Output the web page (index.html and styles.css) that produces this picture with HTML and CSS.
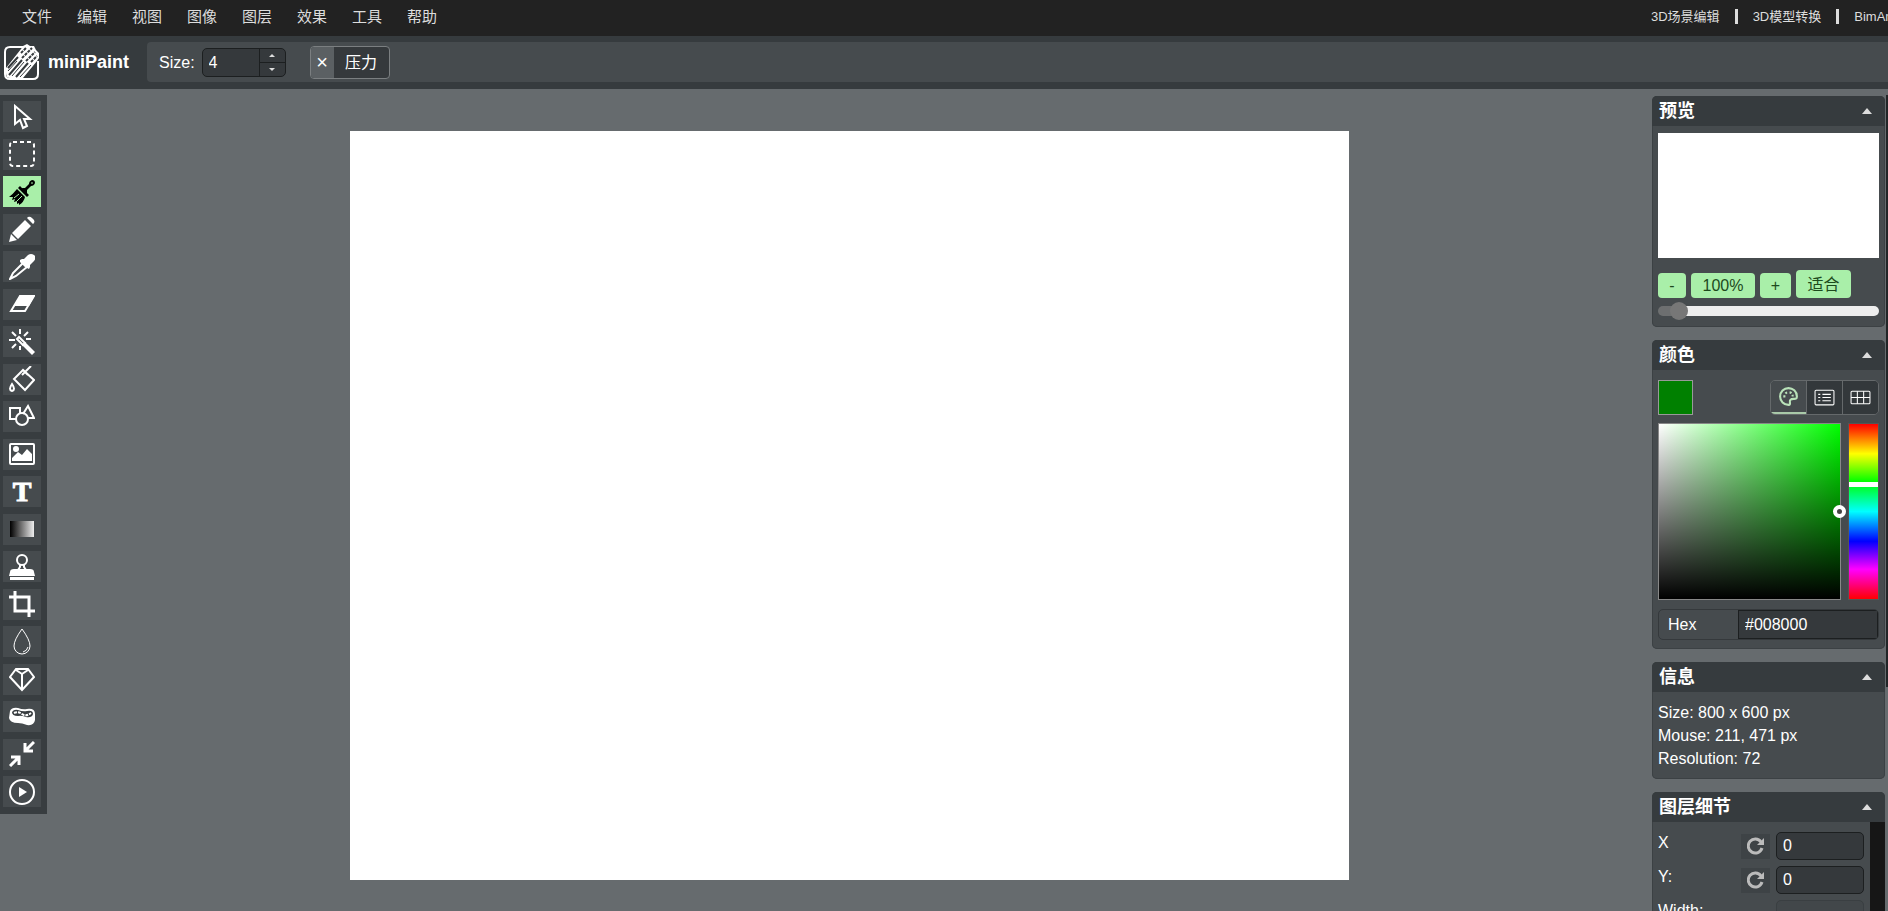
FILE: index.html
```html
<!doctype html>
<html lang="zh-cmn-Hans">
<head>
<meta charset="utf-8">
<title>miniPaint</title>
<meta name="viewport" content="width=device-width, initial-scale=1.0">
<link rel="stylesheet" href="styles.css">
</head>
<body>

<nav class="menu">
	<ul class="menu-main">
		<li><a href="#file">文件</a></li>
		<li><a href="#edit">编辑</a></li>
		<li><a href="#view">视图</a></li>
		<li><a href="#image">图像</a></li>
		<li><a href="#layers">图层</a></li>
		<li><a href="#effects">效果</a></li>
		<li><a href="#tools">工具</a></li>
		<li><a href="#help">帮助</a></li>
	</ul>
	<ul class="menu-links">
		<li><a href="#editor">3D场景编辑</a></li>
		<li><a href="#convert">3D模型转换</a></li>
		<li><a href="#bimant">BimAnt</a></li>
	</ul>
</nav>

<header class="submenu">
	<a class="logo" href="#home">
		<svg viewBox="0 0 36 36" width="36" height="36" fill="none" stroke="#fff">
			<path stroke-width="2" d="M20 3H6Q1 3 1 8v22q0 5 5 5h23q5 0 5-5V17"/>
			<path fill="#fff" stroke="none" d="M2 24 17 5l2-3 4-2 3 2 4 0 2 4 3 3 0 5-2 3L19 34H6q-4 0-4-5z"/>
			<path stroke="#34393c" stroke-width="2" d="M4 24 14 13M5 31l13-15M12 33l12-14"/>
			<path stroke="#34393c" stroke-width="2" stroke-dasharray="3 1" d="M17 9l5-5M18 14l10-10M22 17l9-9M27 18l6-6"/>
			<path stroke="#34393c" d="M4 27l9-10M8 32l12-14M16 33l11-12"/>
		</svg>
		<span>miniPaint</span>
	</a>
	<div class="attributes">
		<label for="size">Size:</label>
		<div class="number">
			<input id="size" type="text" value="4">
			<div class="spin">
				<button aria-label="+1"><i class="up"></i></button>
				<button aria-label="-1"><i class="down"></i></button>
			</div>
		</div>
		<button class="toggle"><i>×</i><span>压力</span></button>
	</div>
</header>

<main class="wrapper">
	<aside class="tools">
		<button aria-label="Select"><svg viewBox="0 0 26 26"><path d="M6 2v18l5-4 3 8 4-2-3-7h6z"/></svg></button>
		<button aria-label="Selection"><svg viewBox="0 0 26 26"><rect x="1" y="1" width="24" height="24" rx="3" stroke-dasharray="4 3"/></svg></button>
		<button class="active" aria-label="Brush"><svg viewBox="0 0 26 26"><path class="solid" d="M9 9l2-2 9 9-2 2zM13 9l3 0 4-4q0-3 3-4 3 0 3 3-1 3-4 3l-4 4 0 3zM8 10l8 8q-1 5-6 8l0-2-2 1 0-3-3 1 1-3-3 1 1-3-4 0q4-3 8-8z"/><path class="shine" d="M5 19l5-4M8 22l5-5M22 4h2"/></svg></button>
		<button aria-label="Pencil"><svg viewBox="0 0 26 26"><path class="solid" d="M19 1q2-1 4 1l2 2q1 2 0 3l-1 1-6-6zM16 4l6 6L9 23l-6-6zM2 18l6 6-8 2z"/></svg></button>
		<button aria-label="Pick color"><svg viewBox="0 0 26 26"><path d="M14 9 4 19l-3 6 6-3L18 13z"/><path class="solid" d="M11 6l2-1 2 0 4-4q3-2 6 0t0 6l-4 4 0 2-1 2-4-2-5-5z"/></svg></button>
		<button aria-label="Erase"><svg viewBox="0 0 26 26"><path d="M11 5h14l-9 15H2z"/><path class="solid" d="M11 4h15l-6 11H5z"/></svg></button>
		<button aria-label="Magic erase"><svg viewBox="0 0 26 26"><path d="M11 0v5M3 3l4 4M0 11h6M3 19l4-4M11 21v-4M19 3l-4 4M17 10h5"/><path d="M8 10l2-2 6 6-2 2z"/><path class="solid" d="M13 16l3-3 10 10-3 3z"/></svg></button>
		<button aria-label="Fill"><svg viewBox="0 0 26 26"><path d="M14 4 5 13l11 11 9-10zM22 0l-9 9M14 4l5 5"/><path d="M3 18q-4 6 0 7 4-1 0-7z"/></svg></button>
		<button aria-label="Shape"><svg viewBox="0 0 26 26"><path d="M7 15H1V4h10v5M14 10l5-8 6 12h-6"/><circle cx="13" cy="15" r="6"/></svg></button>
		<button aria-label="Media"><svg viewBox="0 0 26 26"><rect x="1" y="3" width="24" height="20" rx="1"/><circle class="solid" cx="7" cy="8" r="3"/><path class="solid" d="M3 20v-3l6-6 4 3 5-6 5 5v7z"/></svg></button>
		<button aria-label="Text"><svg viewBox="0 0 26 26"><text x="13" y="22">T</text></svg></button>
		<button aria-label="Gradient"><i class="gradient"></i></button>
		<button aria-label="Clone"><svg viewBox="0 0 26 26"><circle cx="13" cy="6" r="5"/><path d="M11 10v3l-2 3h8l-2-3v-3"/><path class="solid" d="M1 18q0-3 4-3h16q4 0 4 3l1 4H0zM1 23h24v3H1z"/></svg></button>
		<button aria-label="Crop"><svg viewBox="0 0 26 26"><path stroke-width="3" d="M0 6h20v20M6 0v20h20"/></svg></button>
		<button aria-label="Blur"><svg viewBox="0 0 26 26"><path stroke-width="1" d="M13 0q8 11 8 17a8 8 0 0 1-16 0q0-6 8-17zM19 18q-1 4-5 5"/></svg></button>
		<button aria-label="Sharpen"><svg viewBox="0 0 26 26"><path d="M7 3h12l6 8-12 13L1 11zM13 23V8M13 8 7 4M13 8l6-4"/></svg></button>
		<button aria-label="Desaturate"><svg viewBox="0 0 26 26"><path class="solid" d="M1 7q2-4 8-3 5 2 9 1 8-1 8 5v6q-1 6-8 5-5-2-9-2-8 0-9-5z"/><path class="hole" d="M3 8q2-3 6-2 5 2 9 1 6-1 6 3-1 4-7 3-5-2-8-1-6 0-6-4z"/><path stroke-dasharray="3 1" d="M5 9q4-2 8 1t9-1"/></svg></button>
		<button aria-label="Bulge/Pinch"><svg viewBox="0 0 26 26"><path d="M25 1l-8 8M16 2v8h8M1 25l8-8M10 24v-8H2" stroke-width="3"/></svg></button>
		<button aria-label="Animation"><svg viewBox="0 0 26 26"><circle cx="13" cy="13" r="12"/><path class="solid" d="M10 8l8 5-8 5z"/></svg></button>
	</aside>

	<section class="stage">
		<canvas class="canvas" width="999" height="749"></canvas>
	</section>

	<aside class="sidebar">
		<section class="block">
			<h2>预览 <i class="up"></i></h2>
			<div class="content preview">
				<canvas class="thumb" width="221" height="125"></canvas>
				<div class="zoom">
					<button class="minus">-</button>
					<button>100%</button>
					<button class="plus">+</button>
					<button class="fit">适合</button>
				</div>
				<input class="range" type="range" min="0" max="100" value="6" aria-label="Zoom">
			</div>
		</section>

		<section class="block">
			<h2>颜色 <i class="up"></i></h2>
			<div class="content colors">
				<div class="color-top">
					<button class="swatch" aria-label="Color"></button>
					<div class="tabs">
						<button class="active" aria-label="Picker"><svg viewBox="0 0 20 20"><path stroke-width="2" d="M10 2a8 8 0 1 0 0 16c3 0 0-4 2-5 2-2 6 1 6-3 0-5-4-8-8-8z"/><path stroke-width="2" stroke-dasharray="2 2" d="M6 11q0-5 4-5t4 4"/></svg></button>
						<button aria-label="Channels"><svg viewBox="0 0 20 20"><rect x="1" y="3" width="18" height="14" rx="1"/><path d="M4 7h2M8 7h8M4 10h2M8 10h8M4 13h2M8 13h8"/></svg></button>
						<button aria-label="Swatches"><svg viewBox="0 0 20 20"><rect x="1" y="4" width="18" height="12" rx="1"/><path d="M1 10h18M7 4v12M13 4v12"/></svg></button>
					</div>
				</div>
				<div class="picker">
					<div class="gradient-area"><i class="handle"></i></div>
					<div class="hue"><i class="handle"></i></div>
				</div>
				<div class="hex">
					<label for="hex">Hex</label>
					<input id="hex" type="text" value="#008000">
				</div>
			</div>
		</section>

		<section class="block">
			<h2>信息 <i class="up"></i></h2>
			<div class="content info">
				<p>Size: 800 x 600 px</p>
				<p>Mouse: 211, 471 px</p>
				<p>Resolution: 72</p>
			</div>
		</section>

		<section class="block">
			<h2>图层细节 <i class="up"></i></h2>
			<div class="content details">
				<div class="row">
					<label for="x">X</label>
					<button aria-label="Reset X"><svg viewBox="0 0 18 18"><path d="M14 5a7 7 0 1 0 1 6"/><path class="solid" d="M17 1v7h-7z"/></svg></button>
					<input id="x" type="text" value="0">
				</div>
				<div class="row">
					<label for="y">Y:</label>
					<button aria-label="Reset Y"><svg viewBox="0 0 18 18"><path d="M14 5a7 7 0 1 0 1 6"/><path class="solid" d="M17 1v7h-7z"/></svg></button>
					<input id="y" type="text" value="0">
				</div>
				<div class="row">
					<label for="width">Width:</label>
					<input id="width" class="off" type="text" disabled>
				</div>
			</div>
		</section>
	</aside>
</main>

</body>
</html>
```
FILE: styles.css
```css
* {
	box-sizing: border-box;
}
body {
	display: flex;
	flex-direction: column;
	height: 100vh;
	margin: 0;
	overflow: hidden;
	background: #666b6e;
	color: #fff;
	font: 16px/23px "Liberation Sans", "Noto Sans CJK SC", sans-serif;
}
button, input {
	margin: 0;
	padding: 0;
	border: 0;
	color: inherit;
	font: inherit;
}
ul, p, h2 {
	margin: 0;
	padding: 0;
	list-style: none;
}
a {
	color: inherit;
	text-decoration: none;
}
svg {
	display: block;
	fill: none;
	stroke: currentColor;
}
.up, .down {
	border: 4px solid transparent;
}
.up {
	border-top: 0;
	border-bottom-color: #ddd;
}
.down {
	border-bottom: 0;
	border-top-color: #ddd;
}

/* menu */
.menu {
	display: flex;
	flex: none;
	justify-content: space-between;
	height: 36px;
	background: #222;
	color: #ddd;
	line-height: 33px;
}
.menu ul {
	display: flex;
	white-space: nowrap;
}
.menu-main {
	gap: 25px;
	padding-left: 22px;
	font-size: 15px;
}
.menu .menu-links {
	width: 237px;
	height: 33px;
	overflow: hidden;
	font-size: 13px;
}
.menu-links li {
	display: flex;
	align-items: center;
}
.menu-links li + li::before {
	content: "";
	width: 3px;
	height: 15px;
	margin: 0 15px;
	background: #ddd;
}

/* tool attributes */
.submenu {
	display: flex;
	flex: none;
	height: 53px;
	padding: 6px 0 7px 4px;
	background: #363b3e;
}
.logo {
	display: flex;
	align-items: center;
	gap: 8px;
	width: 143px;
	font-size: 18px;
	font-weight: bold;
}
.attributes {
	display: flex;
	flex: 1;
	align-items: center;
	padding-left: 12px;
	border-radius: 4px 0 0 4px;
	background: #464b4e;
}
.number {
	display: flex;
	width: 84px;
	height: 29px;
	margin: 0 24px 0 7px;
	border: 1px solid #1c1f20;
	border-radius: 5px;
	background: #35393c;
}
.number input {
	flex: 1;
	min-width: 0;
	padding-left: 6px;
	background: none;
}
.spin {
	display: flex;
	flex-direction: column;
	width: 26px;
	border-left: 1px solid #1c1f20;
}
.spin button {
	display: flex;
	flex: 1;
	align-items: center;
	justify-content: center;
	background: none;
}
.spin button + button {
	border-top: 1px solid #1c1f20;
}
.spin i {
	border-left-width: 3px;
	border-right-width: 3px;
}
.spin .up {
	border-bottom-width: 3px;
}
.spin .down {
	border-top-width: 3px;
}
.toggle {
	display: flex;
	width: 80px;
	height: 33px;
	overflow: hidden;
	border: 1px solid #7b7f81;
	border-radius: 4px;
	background: #35393c;
	line-height: 31px;
}
.toggle i {
	width: 23px;
	background: #5b6063;
	font-size: 20px;
	font-style: normal;
}
.toggle span {
	flex: 1;
}

/* tools */
.wrapper {
	display: flex;
	flex: 1;
	align-items: flex-start;
	min-height: 0;
}
.tools {
	display: flex;
	flex: none;
	flex-direction: column;
	justify-content: space-between;
	width: 47px;
	height: 719px;
	margin-top: 6px;
	padding: 6px 6px 7px 3px;
	background: #383d40;
}
.tools button {
	display: flex;
	align-items: center;
	justify-content: center;
	height: 31px;
	background: #464b4e;
}
.tools .active {
	background: #a9efa9;
	color: #000;
}
.tools svg {
	width: 26px;
	height: 26px;
	stroke-width: 2;
}
.tools text {
	fill: #fff;
	stroke: #fff;
	stroke-width: 1;
	font: bold 28px "Liberation Serif", serif;
	text-anchor: middle;
}
.solid {
	fill: currentColor;
	stroke: none;
}
.shine {
	stroke: #a9efa9;
	stroke-width: 1;
}
.hole {
	fill: #383d40;
	stroke: none;
}
.gradient {
	width: 24px;
	height: 16px;
	background: linear-gradient(to right, #000, #eee);
}

/* drawing area */
.stage {
	display: flex;
	flex: 1;
	justify-content: center;
	min-width: 0;
	padding-top: 42px;
}
.canvas {
	flex: none;
	background: #fff;
}

/* sidebar */
.sidebar {
	position: relative;
	display: flex;
	flex: none;
	flex-direction: column;
	gap: 13px;
	align-self: stretch;
	width: 236px;
	padding: 7px 3px 0 0;
	overflow: hidden;
}
/* scroll thumb */
.sidebar::after {
	content: "";
	position: absolute;
	top: 6px;
	right: 0;
	width: 2px;
	height: 72%;
	background: #222527;
}
.block {
	flex: none;
	overflow: hidden;
	border-radius: 5px;
	background: #464b4e;
	box-shadow: inset 0 0 0 1px #3c4144;
}
.block h2 {
	display: flex;
	align-items: center;
	justify-content: space-between;
	height: 30px;
	padding: 0 13px 0 7px;
	background: #363b3e;
	font-size: 18px;
	line-height: 28px;
}
.block h2 .up {
	border-width: 0 5px 6px;
}
.content {
	padding: 7px 6px;
}
.thumb {
	display: block;
	width: 100%;
	height: 125px;
	background: #fff;
}
.zoom {
	display: flex;
	align-items: flex-end;
	gap: 5px;
	margin-top: 12px;
}
.zoom button {
	width: 64px;
	height: 25px;
	border-radius: 4px;
	background: #a9efa9;
	color: #1d4a1d;
}
.zoom .minus {
	width: 28px;
}
.zoom .plus {
	width: 31px;
}
.zoom .fit {
	width: 55px;
	height: 28px;
}
.range {
	display: block;
	width: 100%;
	height: 19px;
	margin-top: 3px;
	appearance: none;
	background: none;
}
.range::-webkit-slider-runnable-track {
	height: 10px;
	border-radius: 5px;
	background: linear-gradient(to right, #6d6f70 20px, #eee 20px);
}
.range::-webkit-slider-thumb {
	width: 18px;
	height: 18px;
	margin-top: -4px;
	border-radius: 50%;
	appearance: none;
	background: #777;
}

.colors {
	padding: 10px 6px 9px;
}
.color-top {
	display: flex;
	justify-content: space-between;
	height: 35px;
}
.swatch {
	width: 35px;
	border: 1px solid #999;
	background: #008000;
}
.tabs {
	display: flex;
	width: 109px;
	overflow: hidden;
	border: 1px solid #65696b;
	border-radius: 5px;
}
.tabs button {
	display: flex;
	flex: 1;
	align-items: center;
	justify-content: center;
	background: #33383b;
}
.tabs button + button {
	border-left: 1px solid #65696b;
}
.tabs .active {
	border-bottom: 2px solid #a9c9a9;
	background: #464b4e;
	color: #b9e2b9;
}
.tabs svg {
	width: 21px;
	height: 21px;
	stroke-width: 1;
}
.picker {
	display: flex;
	gap: 7px;
	height: 177px;
	margin-top: 8px;
}
.gradient-area {
	position: relative;
	flex: 1;
	border: 1px solid #888;
	background: linear-gradient(to top, #000, transparent), linear-gradient(to right, #fff, #0f0);
}
.gradient-area .handle {
	position: absolute;
	top: 46%;
	right: -6px;
	width: 13px;
	height: 13px;
	border: 4px solid #fff;
	border-radius: 50%;
	background: #444;
}
.hue {
	position: relative;
	width: 31px;
	border: 1px solid #555;
	background: linear-gradient(#f00, #ff0 17%, #0f0 33%, #0ff 50%, #00f 67%, #f0f 83%, #f00);
}
.hue .handle {
	position: absolute;
	top: 33%;
	left: 0;
	right: 0;
	height: 5px;
	background: #fff;
}
.hex {
	display: flex;
	height: 31px;
	margin-top: 9px;
	overflow: hidden;
	border: 1px solid #35393c;
	border-radius: 5px;
	line-height: 29px;
}
.hex label {
	width: 79px;
	padding-left: 9px;
}
.hex input {
	flex: 1;
	min-width: 0;
	padding-left: 6px;
	border: 1px solid #1c1f20;
	background: #35393c;
}

.info {
	padding: 9px 6px;
}
.block .details {
	padding: 7px 6px;
	border-right: 15px solid #161616;
}
.row {
	display: flex;
	align-items: center;
	height: 34px;
}
.row label {
	flex: 1;
	align-self: flex-start;
	padding-top: 2px;
}
.row button {
	display: flex;
	align-items: center;
	justify-content: center;
	width: 29px;
	height: 25px;
	margin-right: 6px;
	background: #3e4346;
	color: #bbb;
}
.row svg {
	width: 18px;
	height: 18px;
	stroke-width: 3;
}
.row input {
	width: 88px;
	height: 28px;
	padding-left: 6px;
	border: 1px solid #1c1f20;
	border-radius: 5px;
	background: #35393c;
}
.row .off {
	border-color: #3a3f42;
	background: #42474a;
}
```
